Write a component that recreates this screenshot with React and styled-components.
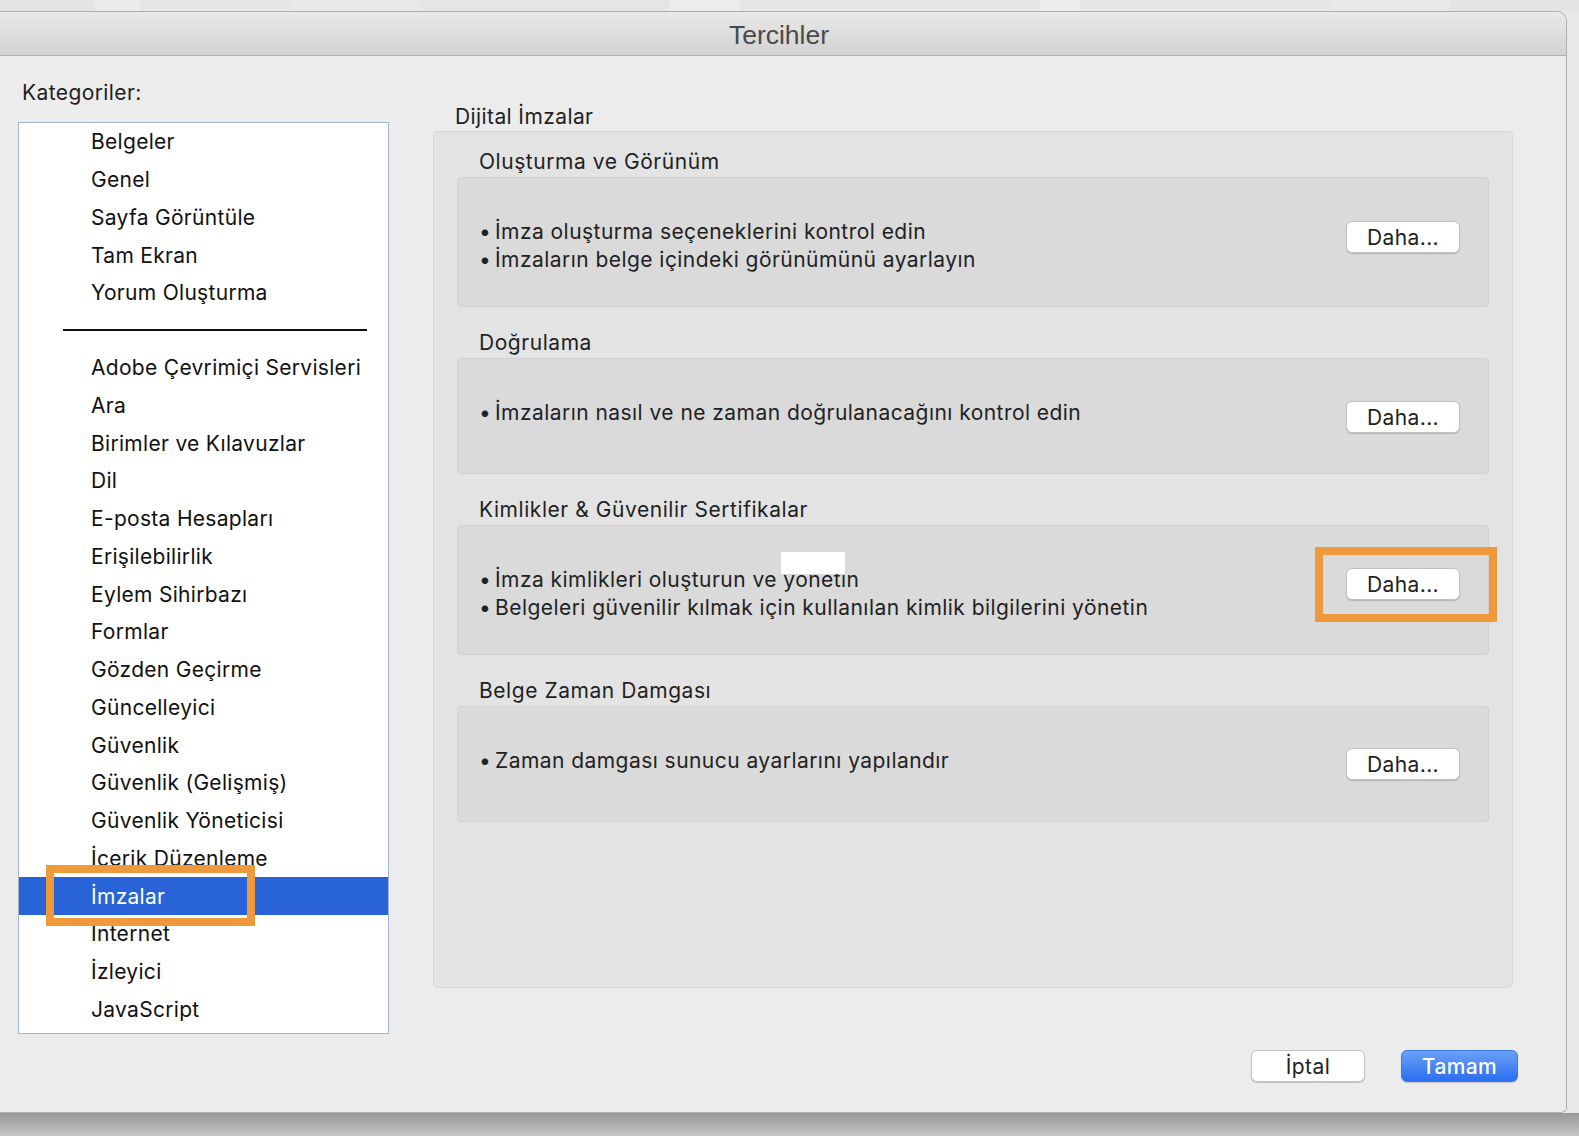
import React from "react";
import styled, { createGlobalStyle } from "styled-components";

const GlobalStyle = createGlobalStyle`
  * { box-sizing: border-box; }
  body {
    margin: 0;
    background: #e8e8e8;
    font-family: Inter, "Noto Sans", sans-serif;
    color: #1f1f1f;
    -webkit-font-smoothing: antialiased;
  }
`;

const Screen = styled.div`
  width: 1579px;
  height: 1136px;
  overflow: hidden;
  display: flex;
  flex-direction: column;
`;

const Backdrop = styled.div`
  height: 11px;
  display: flex;
  background: #e6e6e6;
`;

const BackdropBlock = styled.span`
  height: 100%;
  width: ${(p) => p.w}px;
  background: ${(p) => p.bg};
`;

const Window = styled.div`
  width: 1567px;
  height: 1102px;
  flex: none;
  display: flex;
  flex-direction: column;
  background: #ececec;
  border: 1px solid #b0b0b0;
  border-left: 0;
  border-radius: 0 10px 6px 0;
  overflow: hidden;
`;

const TitleBar = styled.div`
  height: 44px;
  flex: none;
  display: flex;
  align-items: center;
  justify-content: center;
  padding: 3px 8px 0 0;
  background: linear-gradient(#e9e9e9, #d2d2d2);
  border-bottom: 1px solid #b2b2b2;
  font-family: "Liberation Sans", Arial, sans-serif;
  font-size: 26.5px;
  color: #4a4a4a;
`;

const Main = styled.div`
  display: flex;
  padding-left: 18px;
`;

const Sidebar = styled.div`
  width: 371px;
  display: flex;
  flex-direction: column;
`;

const Label = styled.div`
  font-size: 21px;
  letter-spacing: 0.4px;
  line-height: 24px;
  color: #1f1f1f;
  margin: ${(p) => p.margin};
`;

const CategoryList = styled.div`
  position: relative;
  height: 912px;
  background: #fff;
  border: 1px solid #a3b1d2;
  overflow: hidden;
`;

const CategoryItem = styled.div`
  height: 37.75px;
  display: flex;
  align-items: center;
  padding-left: 72px;
  font-size: 21px;
  letter-spacing: 0.3px;
  color: ${(p) => (p.$active ? "#fff" : "#111")};
  background: ${(p) => (p.$active ? "#2864d8" : "transparent")};
`;

const Divider = styled.div`
  height: 37px;
  display: flex;
  align-items: center;
  padding-left: 44px;

  &::after {
    content: "";
    width: 304px;
    height: 2px;
    background: #111;
  }
`;

const Callout = styled.div`
  position: absolute;
  left: ${(p) => p.x}px;
  top: ${(p) => p.y}px;
  width: ${(p) => p.w}px;
  height: ${(p) => p.h}px;
  border: 8px solid #f0993c;
  pointer-events: none;
`;

const Content = styled.div`
  margin-left: 44px;
  width: 1080px;
  display: flex;
  flex-direction: column;
`;

const Group = styled.div`
  height: 857px;
  background: #e3e3e3;
  border: 1px solid #d6d6d6;
  border-radius: 5px;
  padding: 18px 23px 0 23px;
  display: flex;
  flex-direction: column;
  gap: 24px;
`;

const Section = styled.div`
  display: flex;
  flex-direction: column;
`;

const SectionTitle = styled.div`
  font-size: 21px;
  letter-spacing: 0.55px;
  line-height: 24px;
  padding-left: 22px;
  margin-bottom: 3px;
  color: #1f1f1f;
`;

const SectionBox = styled.div`
  position: relative;
  height: ${(p) => p.h}px;
  display: flex;
  align-items: center;
  justify-content: space-between;
  padding: 0 28px 0 21px;
  background: #dadada;
  border: 1px solid #d1d1d1;
  border-radius: 4px;
`;

const Bullets = styled.ul`
  list-style: none;
  margin: ${(p) => (p.$multi ? "8px" : "-6px")} 0 0 0;
  padding: 0;
`;

const Bullet = styled.li`
  display: flex;
  font-size: 21px;
  letter-spacing: 0.45px;
  line-height: 28px;
  color: #222;

  &::before {
    content: "•";
    width: 16px;
    flex: none;
  }
`;

const PushButton = styled.button`
  width: ${(p) => p.w || 114}px;
  height: 32px;
  margin-top: ${(p) => p.$offset || 0}px;
  border-radius: 6px;
  font-family: inherit;
  font-size: 21px;
  letter-spacing: 0.4px;
  cursor: pointer;
  border: 1px solid ${(p) => (p.$primary ? "#3a78ec" : "#c2c2c2")};
  color: ${(p) => (p.$primary ? "#fff" : "#222")};
  font-weight: ${(p) => (p.$primary ? 500 : 400)};
  background: ${(p) =>
    p.$primary ? "linear-gradient(#69a1f7, #2c6ef0)" : "#fff"};
  box-shadow: 0 1px 1px rgba(0, 0, 0, 0.18);
`;

const Redaction = styled.div`
  position: absolute;
  left: 323px;
  top: 26px;
  width: 64px;
  height: 22px;
  background: #fff;
`;

const Footer = styled.div`
  margin-top: 16px;
  display: flex;
  justify-content: flex-end;
  gap: 36px;
  padding-right: 48px;
`;

const Shade = styled.div`
  flex: 1;
  background: linear-gradient(#999, #c4c4c4);
`;

const topCategories = ["Belgeler", "Genel", "Sayfa Görüntüle", "Tam Ekran", "Yorum Oluşturma"];
const categories = [
  "Adobe Çevrimiçi Servisleri",
  "Ara",
  "Birimler ve Kılavuzlar",
  "Dil",
  "E-posta Hesapları",
  "Erişilebilirlik",
  "Eylem Sihirbazı",
  "Formlar",
  "Gözden Geçirme",
  "Güncelleyici",
  "Güvenlik",
  "Güvenlik (Gelişmiş)",
  "Güvenlik Yöneticisi",
  "İçerik Düzenleme",
  "İmzalar",
  "Internet",
  "İzleyici",
  "JavaScript",
];

const sections = [
  {
    title: "Oluşturma ve Görünüm",
    h: 130,
    lines: ["İmza oluşturma seçeneklerini kontrol edin", "İmzaların belge içindeki görünümünü ayarlayın"],
    offset: -10,
  },
  {
    title: "Doğrulama",
    h: 116,
    lines: ["İmzaların nasıl ve ne zaman doğrulanacağını kontrol edin"],
    offset: 2,
  },
  {
    title: "Kimlikler & Güvenilir Sertifikalar",
    h: 130,
    lines: ["İmza kimlikleri oluşturun ve yönetin", "Belgeleri güvenilir kılmak için kullanılan kimlik bilgilerini yönetin"],
    offset: -12,
    marked: true,
  },
  {
    title: "Belge Zaman Damgası",
    h: 116,
    lines: ["Zaman damgası sunucu ayarlarını yapılandır"],
    offset: 0,
  },
];

const backdrop = [
  [95, "#e4e4e4"], [45, "#ebebeb"], [150, "#e6e6e6"], [130, "#e9e9e9"], [250, "#e5e5e5"],
  [70, "#ececec"], [300, "#e6e6e6"], [40, "#ededed"], [250, "#e6e6e6"], [120, "#e9e9e9"], [129, "#e4e4e4"],
];

export default function App() {
  return (
    <Screen>
      <GlobalStyle />
      <Backdrop>
        {backdrop.map(([w, bg], i) => (
          <BackdropBlock key={i} w={w} bg={bg} />
        ))}
      </Backdrop>
      <Window>
        <TitleBar>Tercihler</TitleBar>
        <Main>
          <Sidebar>
            <Label margin="25px 0 17px 4px">Kategoriler:</Label>
            <CategoryList>
              {topCategories.map((c) => (
                <CategoryItem key={c}>{c}</CategoryItem>
              ))}
              <Divider />
              {categories.map((c) => (
                <CategoryItem key={c} $active={c === "İmzalar"}>
                  {c}
                </CategoryItem>
              ))}
              <Callout x={27} y={742} w={209} h={61} />
            </CategoryList>
          </Sidebar>
          <Content>
            <Label margin="49px 0 2px 22px">Dijital İmzalar</Label>
            <Group>
              {sections.map((s) => (
                <Section key={s.title}>
                  <SectionTitle>{s.title}</SectionTitle>
                  <SectionBox h={s.h}>
                    <Bullets $multi={s.lines.length > 1}>
                      {s.lines.map((l) => (
                        <Bullet key={l}>{l}</Bullet>
                      ))}
                    </Bullets>
                    <PushButton $offset={s.offset}>Daha...</PushButton>
                    {s.marked && (
                      <>
                        <Redaction />
                        <Callout x={857} y={21} w={182} h={75} />
                      </>
                    )}
                  </SectionBox>
                </Section>
              ))}
            </Group>
          </Content>
        </Main>
        <Footer>
          <PushButton>İptal</PushButton>
          <PushButton $primary w={117}>
            Tamam
          </PushButton>
        </Footer>
      </Window>
      <Shade />
    </Screen>
  );
}
